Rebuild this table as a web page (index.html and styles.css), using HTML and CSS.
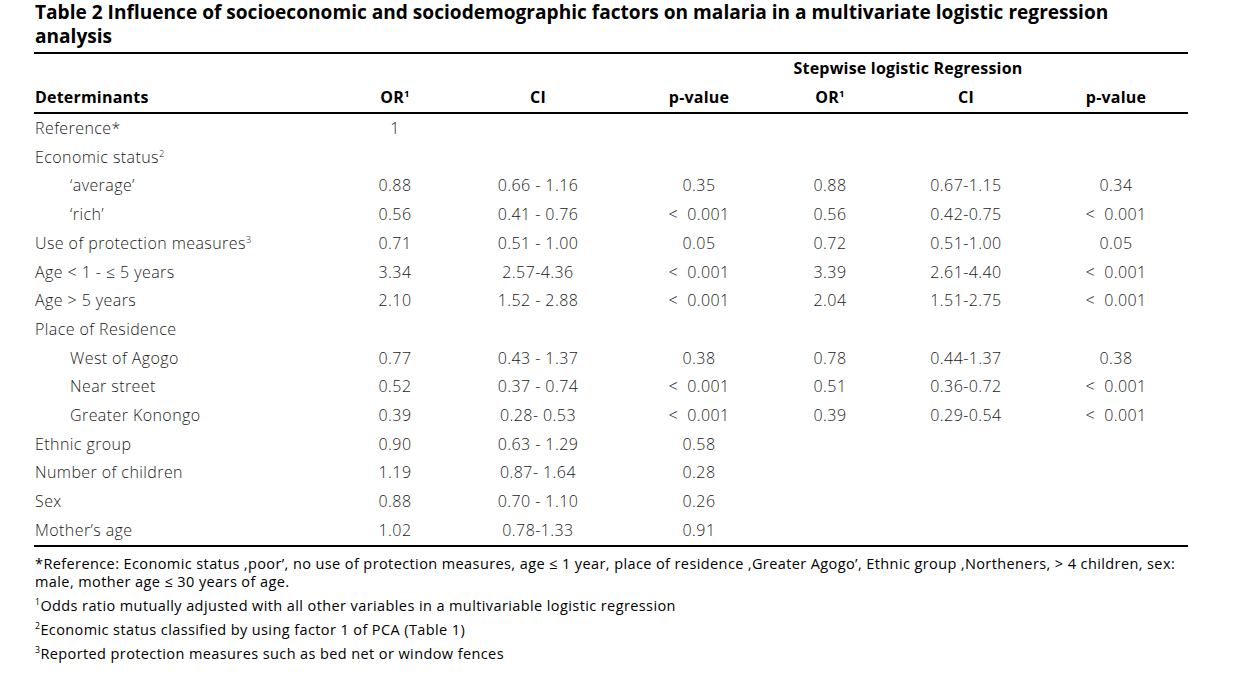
FILE: index.html
```html
<!DOCTYPE html>
<html>
<head>
<meta charset="utf-8">
<link rel="stylesheet" href="styles.css">
</head>
<body>
<div class="page">
  <h1 class="title">Table 2 Influence of socioeconomic and sociodemographic factors on malaria in a multivariate logistic regression analysis</h1>
  <table class="tbl">
    <colgroup>
      <col class="c1"><col class="c2"><col class="c3"><col class="c4"><col class="c5"><col class="c6"><col class="c7">
    </colgroup>
    <thead>
      <tr class="h1row">
        <th></th><th></th><th></th><th></th>
        <th colspan="2">Stepwise logistic Regression</th>
        <th></th>
      </tr>
      <tr class="h2row">
        <th class="left">Determinants</th>
        <th>OR<sup>1</sup></th>
        <th>CI</th>
        <th>p-value</th>
        <th>OR<sup>1</sup></th>
        <th>CI</th>
        <th>p-value</th>
      </tr>
    </thead>
    <tbody>
      <tr><td>Reference*</td><td>1</td><td></td><td></td><td></td><td></td><td></td></tr>
      <tr><td>Economic status<sup>2</sup></td><td></td><td></td><td></td><td></td><td></td><td></td></tr>
      <tr><td class="ind">‘average’</td><td>0.88</td><td>0.66 - 1.16</td><td>0.35</td><td>0.88</td><td>0.67-1.15</td><td>0.34</td></tr>
      <tr><td class="ind">‘rich’</td><td>0.56</td><td>0.41 - 0.76</td><td>&lt;&nbsp; 0.001</td><td>0.56</td><td>0.42-0.75</td><td>&lt;&nbsp; 0.001</td></tr>
      <tr><td>Use of protection measures<sup>3</sup></td><td>0.71</td><td>0.51 - 1.00</td><td>0.05</td><td>0.72</td><td>0.51-1.00</td><td>0.05</td></tr>
      <tr><td>Age &lt; 1 - ≤ 5 years</td><td>3.34</td><td>2.57-4.36</td><td>&lt;&nbsp; 0.001</td><td>3.39</td><td>2.61-4.40</td><td>&lt;&nbsp; 0.001</td></tr>
      <tr><td>Age &gt; 5 years</td><td>2.10</td><td>1.52 - 2.88</td><td>&lt;&nbsp; 0.001</td><td>2.04</td><td>1.51-2.75</td><td>&lt;&nbsp; 0.001</td></tr>
      <tr><td>Place of Residence</td><td></td><td></td><td></td><td></td><td></td><td></td></tr>
      <tr><td class="ind">West of Agogo</td><td>0.77</td><td>0.43 - 1.37</td><td>0.38</td><td>0.78</td><td>0.44-1.37</td><td>0.38</td></tr>
      <tr><td class="ind">Near street</td><td>0.52</td><td>0.37 - 0.74</td><td>&lt;&nbsp; 0.001</td><td>0.51</td><td>0.36-0.72</td><td>&lt;&nbsp; 0.001</td></tr>
      <tr><td class="ind">Greater Konongo</td><td>0.39</td><td>0.28- 0.53</td><td>&lt;&nbsp; 0.001</td><td>0.39</td><td>0.29-0.54</td><td>&lt;&nbsp; 0.001</td></tr>
      <tr><td>Ethnic group</td><td>0.90</td><td>0.63 - 1.29</td><td>0.58</td><td></td><td></td><td></td></tr>
      <tr><td>Number of children</td><td>1.19</td><td>0.87- 1.64</td><td>0.28</td><td></td><td></td><td></td></tr>
      <tr><td>Sex</td><td>0.88</td><td>0.70 - 1.10</td><td>0.26</td><td></td><td></td><td></td></tr>
      <tr><td>Mother’s age</td><td>1.02</td><td>0.78-1.33</td><td>0.91</td><td></td><td></td><td></td></tr>
    </tbody>
  </table>
  <div class="notes">
    <p>*Reference: Economic status ‚poor’, no use of protection measures, age ≤ 1 year, place of residence ‚Greater Agogo’, Ethnic group ‚Northeners, &gt; 4 children, sex: male, mother age ≤ 30 years of age.</p>
    <p><sup>1</sup>Odds ratio mutually adjusted with all other variables in a multivariable logistic regression</p>
    <p><sup>2</sup>Economic status classified by using factor 1 of PCA (Table 1)</p>
    <p><sup>3</sup>Reported protection measures such as bed net or window fences</p>
  </div>
</div>
</body>
</html>
```

FILE: styles.css
```css
html, body {
  margin: 0;
  padding: 0;
  background: #ffffff;
}
.page {
  width: 1154px;
  padding: 0 0 0 34px;
  font-family: "Open Sans", "Liberation Sans", sans-serif;
  color: #1a1a1a;
}
.title {
  width: 1100px;
  margin: 0 0 4px 0;
  padding: 0 0 0 1px;
  font-size: 19.1px;
  line-height: 24px;
  font-weight: 700;
  color: #000;
}
.tbl {
  width: 1154px;
  table-layout: fixed;
  border-collapse: collapse;
  border-top: 2px solid #000;
  border-bottom: 2px solid #000;
}
.c1 { width: 306px; }
.c2 { width: 110px; }
.c3 { width: 176px; }
.c4 { width: 146px; }
.c5 { width: 116px; }
.c6 { width: 156px; }
.c7 { width: 144px; }
.tbl th {
  font-weight: 700;
  font-size: 16px;
  letter-spacing: 0.2px;
  color: #000;
  text-align: center;
  height: 29px;
  padding: 0;
  line-height: 29px;
  white-space: nowrap;
}
.tbl th.left { text-align: left; padding-left: 1px; }
.h2row th { border-bottom: 2px solid #000; }
.tbl td {
  font-size: 16px;
  letter-spacing: 0.42px;
  font-weight: 300;
  text-align: center;
  padding: 0;
  height: 28.7px;
  line-height: 28.7px;
  white-space: nowrap;
}
.tbl td:first-child { text-align: left; padding-left: 1px; }
.tbl td.ind { padding-left: 36px; }
sup {
  font-size: 0.6em;
  line-height: 0;
  vertical-align: 0.65em;
}
.notes {
  padding-top: 8px;
  font-size: 14.5px;
  letter-spacing: 0.4px;
  line-height: 18px;
  color: #000;
}
.notes p {
  margin: 0 0 6px 1px;
}
```
